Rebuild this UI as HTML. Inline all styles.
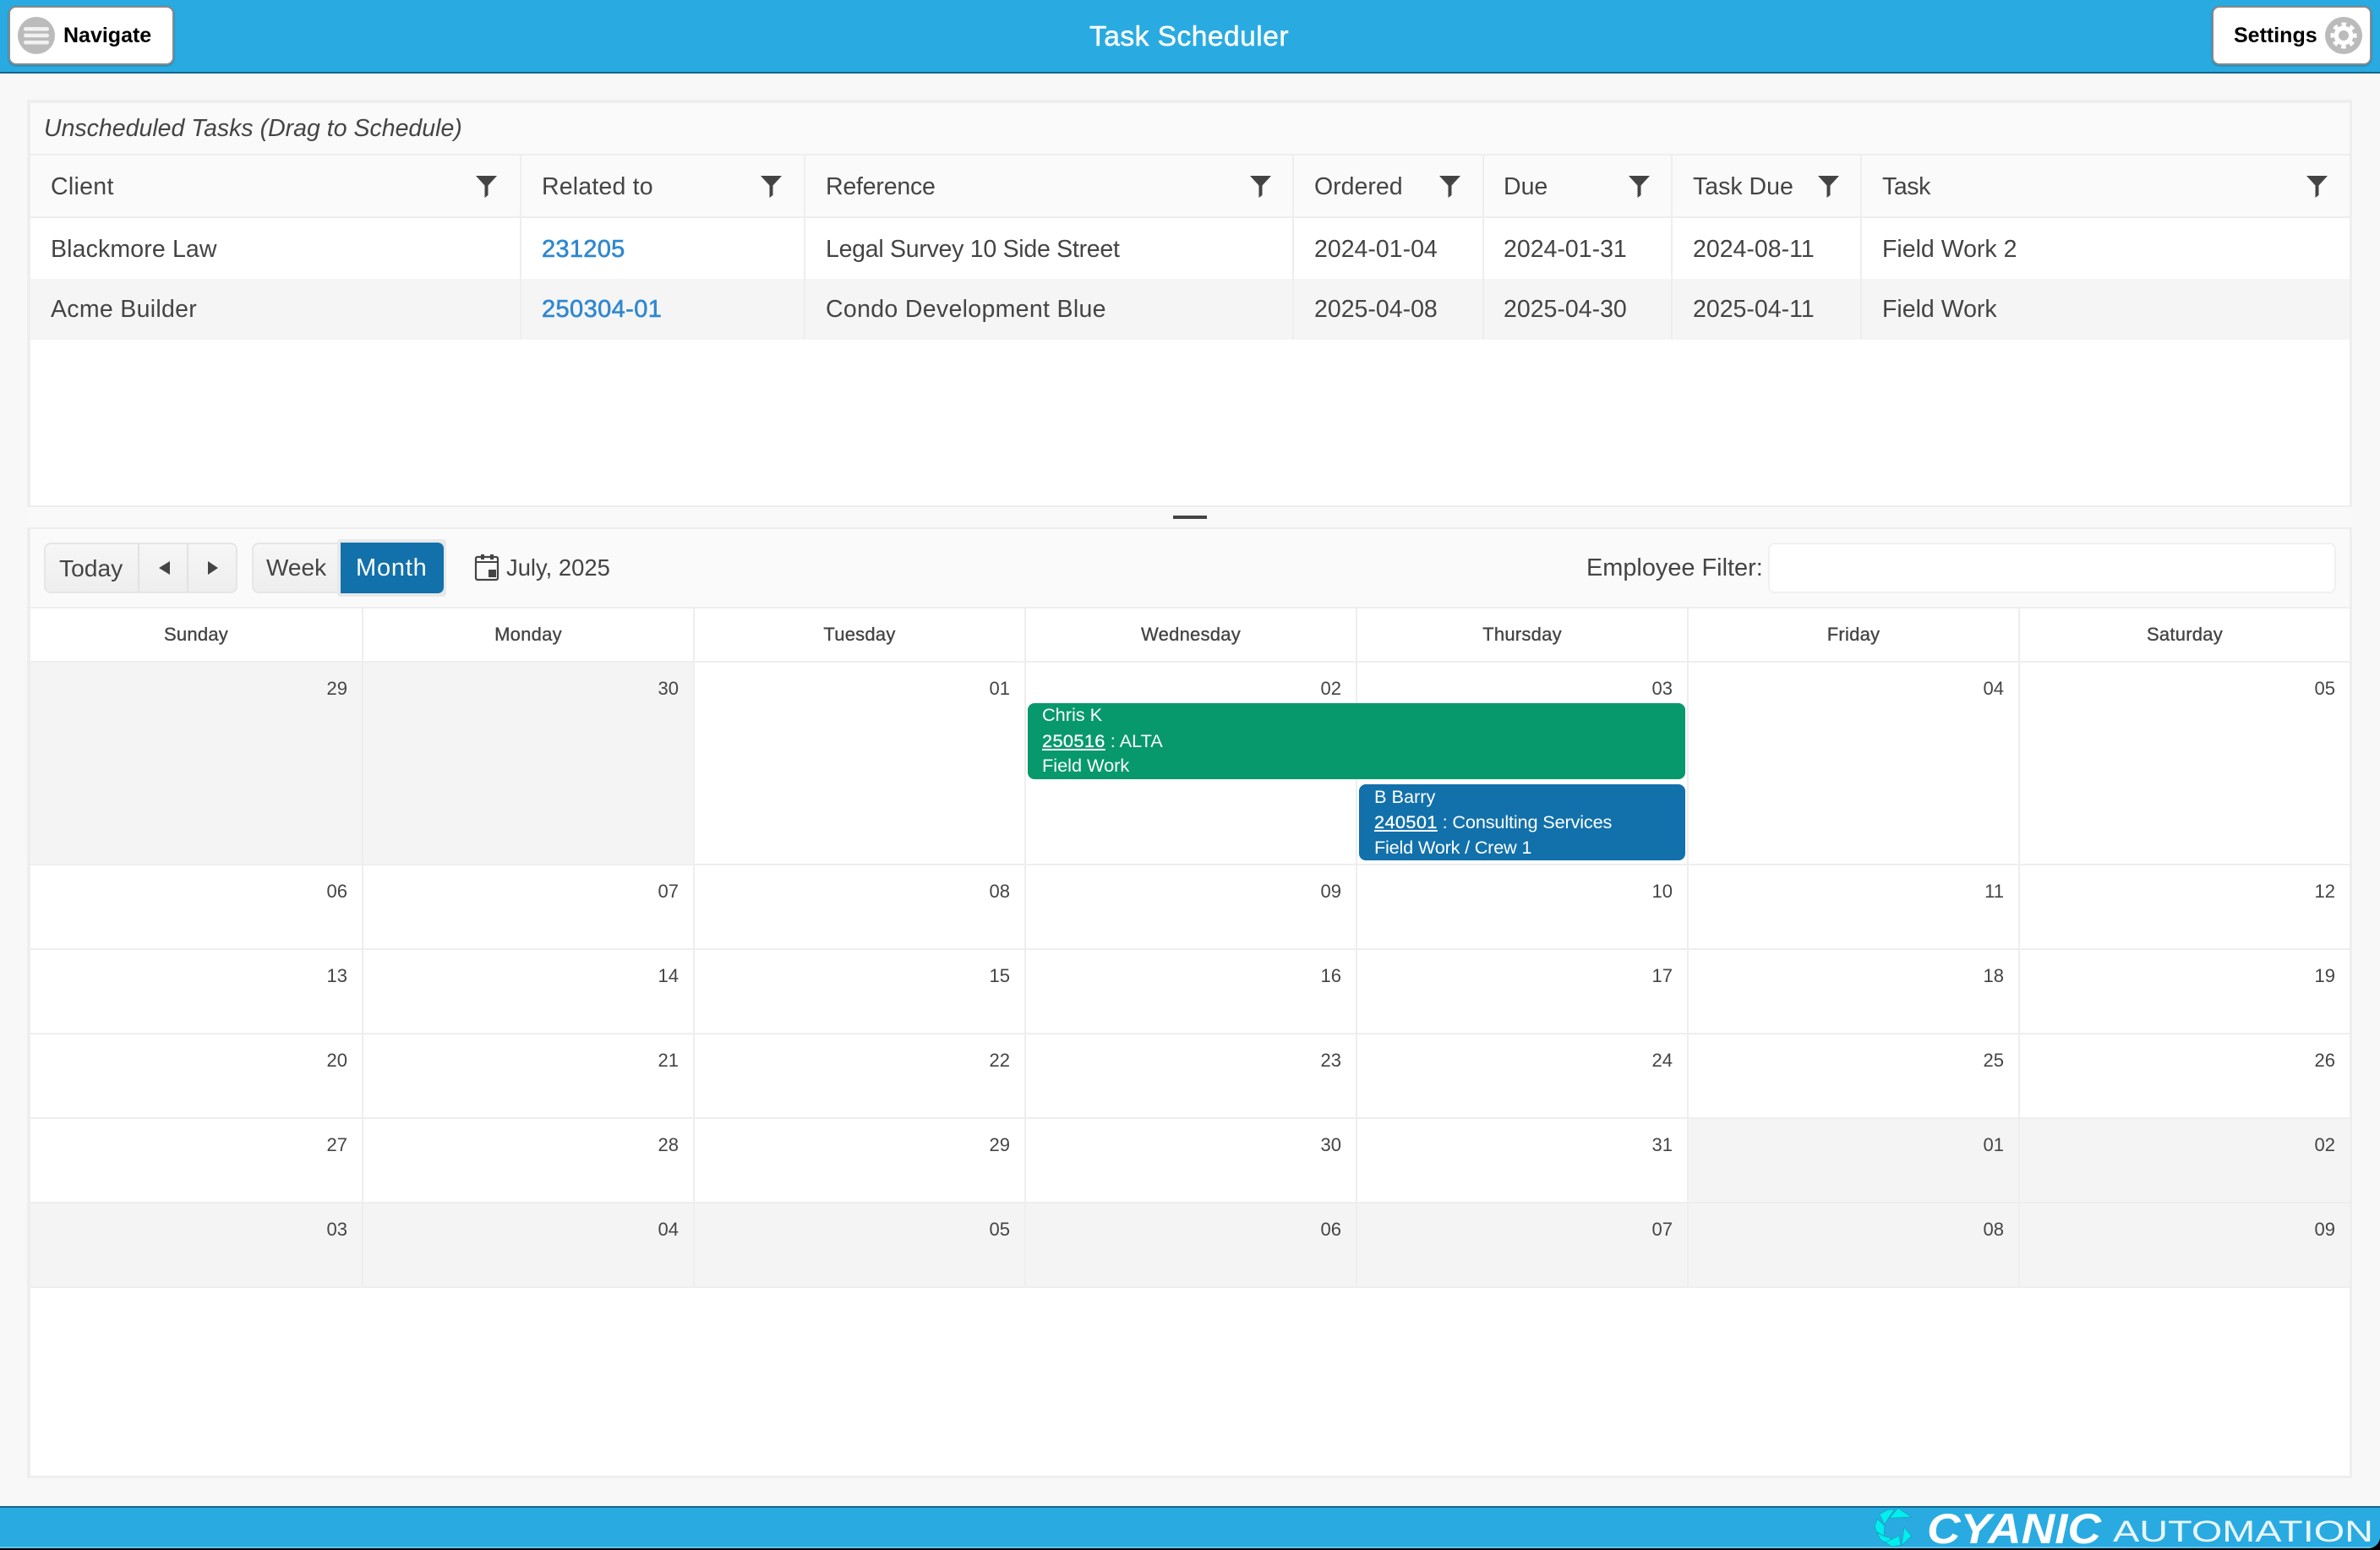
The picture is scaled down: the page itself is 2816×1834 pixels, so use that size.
<!DOCTYPE html>
<html><head><meta charset="utf-8"><title>Task Scheduler</title>
<style>
html,body{margin:0;padding:0;width:2816px;height:1834px;overflow:hidden;background:#000}
body{position:relative;font-family:"Liberation Sans",sans-serif;color:#444}
.b{position:absolute}
.t{position:absolute;white-space:nowrap;line-height:40px;height:40px;margin-top:-20px;font-size:28.5px}
.c{transform:translateX(-50%)}
.f{position:absolute;top:208px;width:25px;height:26px;background:#444;clip-path:polygon(0 0,100% 0,58% 44%,58% 88%,42% 100%,42% 44%)}
.s{position:absolute;top:184px;height:218px;width:2px;background:#eee}
.v{position:absolute;top:720px;height:804px;width:2px;background:#eee}
.h{position:absolute;left:36px;width:2744px;height:2px;background:#eee}
.d{font-size:22px;text-align:right;line-height:30px;height:30px;margin-top:-15px}
.w{font-size:22px;-webkit-text-stroke:.35px #444;letter-spacing:.25px}
.e{color:#fff;font-size:21.7px;line-height:30px;height:30px;margin-top:-15px}
.e u{-webkit-text-stroke:.3px #fff;letter-spacing:.4px}
.a{color:#2f87d0;-webkit-text-stroke:.6px #2f87d0;font-size:29px}
.btn{position:absolute;top:7px;height:66px;background:#fff;border:2px solid #888;border-radius:9px;box-shadow:0 1px 2px rgba(0,0,0,.25)}
.nb{font-weight:bold;font-size:25px;color:#000;line-height:40px;height:40px;margin-top:-20px}
</style></head>
<body>
<div class="b" style="left:0;top:0;width:2816px;height:1832px;background:#f8f8f8;border-bottom-right-radius:14px;overflow:hidden">
  <div class="b" style="left:0;top:0;width:2816px;height:85px;background:#29abe2;border-bottom:2px solid #14668f"></div>
  <div class="b" style="left:0;top:1782px;width:2816px;height:48px;background:#29abe2;border-top:2px solid #14668f;box-sizing:border-box"></div>
  <div class="b" style="left:0;top:1830px;width:2816px;height:2px;background:#62c0ea"></div>
</div>

<!-- header -->
<div class="btn" style="left:10px;width:192px"></div>
<svg class="b" style="left:21px;top:20px" width="44" height="44" viewBox="0 0 44 44"><circle cx="22" cy="22" r="22" fill="#bbb"/><rect x="7" y="12" width="30" height="4.5" rx="2.2" fill="#f1f1f1"/><rect x="7" y="19.7" width="30" height="4.5" rx="2.2" fill="#f1f1f1"/><rect x="7" y="28" width="30" height="4.5" rx="2.2" fill="#f1f1f1"/></svg>
<div class="t nb" style="left:75px;top:42px">Navigate</div>
<div class="t c" style="left:1407px;top:44px;color:#fff;font-size:33.5px;letter-spacing:.5px;-webkit-text-stroke:.5px #fff">Task Scheduler</div>
<div class="btn" style="left:2617px;width:185px"></div>
<div class="t nb" style="left:2643px;top:42px">Settings</div>
<svg class="b" style="left:2751px;top:20px" width="44" height="44" viewBox="0 0 44 44"><circle cx="22" cy="22" r="22" fill="#bbb"/><circle cx="22" cy="22" r="11.5" fill="#fff"/><circle cx="22" cy="22" r="13.5" fill="none" stroke="#fff" stroke-width="4" stroke-dasharray="5.6 5" stroke-dashoffset="2.8"/><circle cx="22" cy="22" r="6" fill="#bbb"/></svg>

<!-- main panel -->
<div class="b" style="left:32px;top:118px;width:2748px;height:1628px;box-sizing:border-box;width:2751px;height:1631px;border:3px solid #eee;border-width:4px 3px 3px 4px;background:#fff"></div>
<div class="b" style="left:36px;top:122px;width:2744px;height:134px;background:#fafafa"></div>
<div class="h" style="top:182px"></div>
<div class="h" style="top:256px"></div>
<div class="b" style="left:36px;top:330px;width:2744px;height:72px;background:#f5f5f5"></div>
<div class="s" style="left:615px"></div><div class="s" style="left:951px"></div><div class="s" style="left:1529px"></div><div class="s" style="left:1754px"></div><div class="s" style="left:1977px"></div><div class="s" style="left:2201px"></div>

<div class="t" style="left:52px;top:152px;font-style:italic;font-size:28.5px">Unscheduled Tasks (Drag to Schedule)</div>

<div class="t" style="left:60px;top:221px;letter-spacing:.3px">Client</div><div class="f" style="left:563px"></div>
<div class="t" style="left:641px;top:221px;letter-spacing:.18px">Related to</div><div class="f" style="left:900px"></div>
<div class="t" style="left:977px;top:221px;letter-spacing:-.2px">Reference</div><div class="f" style="left:1479px"></div>
<div class="t" style="left:1555px;top:221px">Ordered</div><div class="f" style="left:1703px"></div>
<div class="t" style="left:1779px;top:221px">Due</div><div class="f" style="left:1927px"></div>
<div class="t" style="left:2003px;top:221px">Task Due</div><div class="f" style="left:2151px"></div>
<div class="t" style="left:2227px;top:221px;letter-spacing:-.4px">Task</div><div class="f" style="left:2729px"></div>

<div class="t" style="left:60px;top:295px;letter-spacing:.14px">Blackmore Law</div>
<div class="t a" style="left:641px;top:295px;letter-spacing:.3px">231205</div>
<div class="t" style="left:977px;top:295px;letter-spacing:-.27px">Legal Survey 10 Side Street</div>
<div class="t" style="left:1555px;top:295px">2024-01-04</div>
<div class="t" style="left:1779px;top:295px">2024-01-31</div>
<div class="t" style="left:2003px;top:295px">2024-08-11</div>
<div class="t" style="left:2227px;top:295px">Field Work 2</div>

<div class="t" style="left:60px;top:366px;letter-spacing:.3px">Acme Builder</div>
<div class="t a" style="left:641px;top:366px;letter-spacing:.4px">250304-01</div>
<div class="t" style="left:977px;top:366px;letter-spacing:.32px">Condo Development Blue</div>
<div class="t" style="left:1555px;top:366px">2025-04-08</div>
<div class="t" style="left:1779px;top:366px">2025-04-30</div>
<div class="t" style="left:2003px;top:366px">2025-04-11</div>
<div class="t" style="left:2227px;top:366px">Field Work</div>

<!-- splitter -->
<div class="b" style="left:32px;top:598px;width:2751px;height:28px;background:#f9f9f9;border-top:2px solid #eee;border-bottom:2px solid #eee;box-sizing:border-box"></div>
<div class="b" style="left:1388px;top:610px;width:40px;height:4px;background:#444"></div>

<!-- toolbar -->
<div class="b" style="left:36px;top:626px;width:2744px;height:92px;background:#fafafa"></div>
<div class="h" style="top:718px"></div>
<div class="b" style="left:52px;top:642px;width:229px;height:60px;box-sizing:border-box;border:2px solid #e6e6e6;border-radius:8px;background:linear-gradient(#f6f6f6,#eee)"></div>
<div class="b" style="left:163px;top:644px;width:2px;height:56px;background:#e2e2e2"></div>
<div class="b" style="left:221px;top:644px;width:2px;height:56px;background:#e2e2e2"></div>
<div class="t" style="left:70px;top:672px;font-size:28.2px">Today</div>
<div class="b" style="left:188px;top:664px;width:13px;height:16px;background:#444;clip-path:polygon(100% 0,100% 100%,0 50%)"></div>
<div class="b" style="left:246px;top:664px;width:12px;height:16px;background:#444;clip-path:polygon(0 0,100% 50%,0 100%)"></div>
<div class="b" style="left:298px;top:642px;width:110px;height:60px;box-sizing:border-box;border:2px solid #e6e6e6;border-radius:8px 0 0 8px;background:linear-gradient(#f6f6f6,#eee)"></div>
<div class="t" style="left:315px;top:672px;font-size:28px">Week</div>
<div class="b" style="left:399px;top:638px;width:129px;height:68px;background:#e8e8e8;border-radius:4px"></div>
<div class="b" style="left:403px;top:642px;width:122px;height:60px;background:#1271ab;border-radius:0 7px 7px 0"></div>
<div class="t" style="left:421px;top:672px;font-size:29px;letter-spacing:.8px;color:#fff">Month</div>
<svg class="b" style="left:561px;top:655px" width="30" height="33" viewBox="0 0 30 33"><rect x="2" y="4" width="26" height="27" rx="2" fill="none" stroke="#444" stroke-width="2.2"/><rect x="2" y="9" width="26" height="2" fill="#444"/><rect x="8" y="1" width="4" height="6" fill="#444"/><rect x="19" y="1" width="4" height="6" fill="#444"/><rect x="17" y="19" width="9" height="9" fill="#444"/></svg>
<div class="t" style="left:599px;top:672px;font-size:27.4px">July, 2025</div>
<div class="t" style="left:1877px;top:672px;font-size:28.9px">Employee Filter:</div>
<div class="b" style="left:2092px;top:642px;width:672px;height:60px;box-sizing:border-box;background:#fff;border:2px solid #f0f0f0;border-radius:8px"></div>

<!-- calendar grey cells -->
<div class="b" style="left:36px;top:784px;width:785px;height:238px;background:#f4f4f4"></div>
<div class="b" style="left:1997px;top:1324px;width:783px;height:98px;background:#f4f4f4"></div>
<div class="b" style="left:36px;top:1424px;width:2744px;height:98px;background:#f4f4f4"></div>
<div class="h" style="top:782px"></div>
<div class="h" style="top:1022px"></div>
<div class="h" style="top:1122px"></div>
<div class="h" style="top:1222px"></div>
<div class="h" style="top:1322px"></div>
<div class="h" style="top:1422px"></div>
<div class="h" style="top:1522px"></div>
<div class="v" style="left:428px"></div><div class="v" style="left:820px"></div><div class="v" style="left:1212px"></div><div class="v" style="left:1604px"></div><div class="v" style="left:1996px"></div><div class="v" style="left:2388px"></div>

<div class="t c w" style="left:232px;top:751px">Sunday</div>
<div class="t c w" style="left:625px;top:751px">Monday</div>
<div class="t c w" style="left:1017px;top:751px">Tuesday</div>
<div class="t c w" style="left:1409px;top:751px">Wednesday</div>
<div class="t c w" style="left:1801px;top:751px">Thursday</div>
<div class="t c w" style="left:2193px;top:751px">Friday</div>
<div class="t c w" style="left:2585px;top:751px">Saturday</div>

<div class="t d" style="right:2405px;top:815px">29</div><div class="t d" style="right:2013px;top:815px">30</div><div class="t d" style="right:1621px;top:815px">01</div><div class="t d" style="right:1229px;top:815px">02</div><div class="t d" style="right:837px;top:815px">03</div><div class="t d" style="right:445px;top:815px">04</div><div class="t d" style="right:53px;top:815px">05</div>
<div class="t d" style="right:2405px;top:1055px">06</div><div class="t d" style="right:2013px;top:1055px">07</div><div class="t d" style="right:1621px;top:1055px">08</div><div class="t d" style="right:1229px;top:1055px">09</div><div class="t d" style="right:837px;top:1055px">10</div><div class="t d" style="right:445px;top:1055px">11</div><div class="t d" style="right:53px;top:1055px">12</div>
<div class="t d" style="right:2405px;top:1155px">13</div><div class="t d" style="right:2013px;top:1155px">14</div><div class="t d" style="right:1621px;top:1155px">15</div><div class="t d" style="right:1229px;top:1155px">16</div><div class="t d" style="right:837px;top:1155px">17</div><div class="t d" style="right:445px;top:1155px">18</div><div class="t d" style="right:53px;top:1155px">19</div>
<div class="t d" style="right:2405px;top:1255px">20</div><div class="t d" style="right:2013px;top:1255px">21</div><div class="t d" style="right:1621px;top:1255px">22</div><div class="t d" style="right:1229px;top:1255px">23</div><div class="t d" style="right:837px;top:1255px">24</div><div class="t d" style="right:445px;top:1255px">25</div><div class="t d" style="right:53px;top:1255px">26</div>
<div class="t d" style="right:2405px;top:1355px">27</div><div class="t d" style="right:2013px;top:1355px">28</div><div class="t d" style="right:1621px;top:1355px">29</div><div class="t d" style="right:1229px;top:1355px">30</div><div class="t d" style="right:837px;top:1355px">31</div><div class="t d" style="right:445px;top:1355px">01</div><div class="t d" style="right:53px;top:1355px">02</div>
<div class="t d" style="right:2405px;top:1455px">03</div><div class="t d" style="right:2013px;top:1455px">04</div><div class="t d" style="right:1621px;top:1455px">05</div><div class="t d" style="right:1229px;top:1455px">06</div><div class="t d" style="right:837px;top:1455px">07</div><div class="t d" style="right:445px;top:1455px">08</div><div class="t d" style="right:53px;top:1455px">09</div>

<!-- events -->
<div class="b" style="left:1216px;top:832px;width:778px;height:90px;background:#07996b;border-radius:8px"></div>
<div class="t e" style="left:1233px;top:846px">Chris K</div>
<div class="t e" style="left:1233px;top:877px"><u>250516</u> : ALTA</div>
<div class="t e" style="left:1233px;top:906px">Field Work</div>
<div class="b" style="left:1608px;top:928px;width:386px;height:90px;background:#1271ab;border-radius:8px"></div>
<div class="t e" style="left:1626px;top:943px">B Barry</div>
<div class="t e" style="left:1626px;top:973px;letter-spacing:-.15px"><u>240501</u> : Consulting Services</div>
<div class="t e" style="left:1626px;top:1003px;letter-spacing:-.2px">Field Work / Crew 1</div>

<!-- footer logo -->
<svg class="b" style="left:2205px;top:1775px" width="611" height="59" viewBox="2205 1775 611 59">
<g transform="translate(2205 1775) scale(.3333)" fill="#00eeee" stroke="#1c9ab5" stroke-width="2">
<polygon points="92,64 122,28 170,60"/>
<polygon points="56,50 84,35 110,32 74,86"/>
<polygon points="40,92 48,66 74,90 72,128 46,112"/>
<polygon points="48,116 74,128 100,136 80,152 60,140"/>
<polygon points="78,150 126,126 132,160 100,165"/>
<polygon points="144,96 170,128 135,161"/>
</g>
<text x="2280" y="1826" font-family="Liberation Sans" font-weight="bold" font-style="italic" font-size="50" fill="#fff" textLength="206" lengthAdjust="spacingAndGlyphs">CYANIC</text>
<text x="2500" y="1824" font-family="Liberation Sans" font-size="35" fill="#e9f5fb" textLength="308" lengthAdjust="spacingAndGlyphs">AUTOMATION</text>
</svg>
</body></html>
